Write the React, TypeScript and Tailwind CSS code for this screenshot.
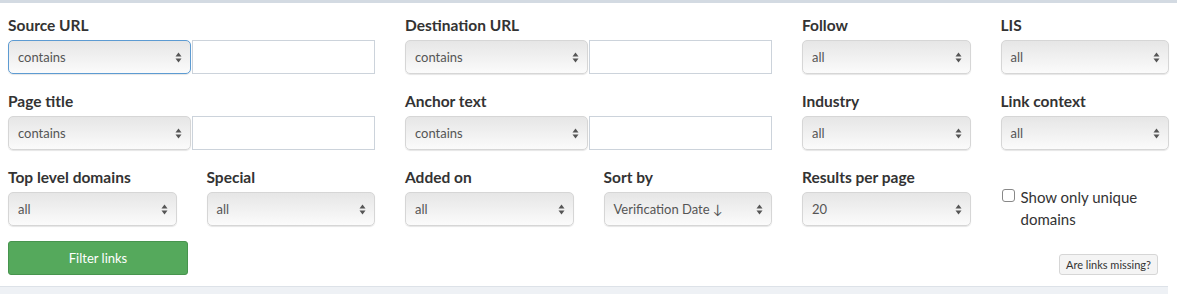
import React from "react";

const font = { fontFamily: '"Source Sans Pro", Lato, "Liberation Sans", sans-serif' };

function Arrows() {
  return (
    <svg width="7" height="11" viewBox="0 0 7 11" className="shrink-0">
      <path d="M3.5 0.5 L6.5 4.5 L0.5 4.5 Z" fill="#555" />
      <path d="M3.5 10.5 L6.5 6.5 L0.5 6.5 Z" fill="#555" />
    </svg>
  );
}

function Select({ value, focused = false, className = "" }: { value: string; focused?: boolean; className?: string }) {
  return (
    <div
      className={
        "h-[34px] flex items-center justify-between pl-[9px] pr-[8px] rounded-[5px] bg-gradient-to-b from-[#e6e6e6] to-[#fbfbfb] text-[13px] text-[#555] shadow-[0_1px_1px_rgba(0,0,0,0.1)] " +
        (focused ? "border border-[#5d9bd2]" : "border border-[#d6d6d6]") +
        " " +
        className
      }
    >
      <span className="pt-[2px]">{value}</span>
      <Arrows />
    </div>
  );
}

function Label({ children }: { children: React.ReactNode }) {
  return <div className="h-[20px] leading-[20px] text-[15.5px] font-bold text-[#333] mb-[5px] whitespace-nowrap">{children}</div>;
}

function TextSelect({ label, focused = false }: { label: string; focused?: boolean }) {
  return (
    <div className="col-span-2">
      <Label>{label}</Label>
      <div className="flex">
        <Select value="contains" focused={focused} className="w-[183px]" />
        <div className="flex-1 h-[34px] border border-[#ccd3db] bg-white ml-px" />
      </div>
    </div>
  );
}

function Field({ label, value }: { label: string; value: string }) {
  return (
    <div>
      <Label>{label}</Label>
      <Select value={value} />
    </div>
  );
}

export default function App() {
  return (
    <div className="w-[1177px] h-[294px] bg-white overflow-hidden" style={font}>
      <div className="h-[3px] bg-[#d3dae2]" />
      <div className="px-[8px] pt-[12px] pb-[11px]">
        <div className="grid grid-cols-[repeat(6,168.5px)] gap-x-[30px] gap-y-[17px]">
          <TextSelect label="Source URL" focused />
          <TextSelect label="Destination URL" />
          <Field label="Follow" value="all" />
          <Field label="LIS" value="all" />

          <TextSelect label="Page title" />
          <TextSelect label="Anchor text" />
          <Field label="Industry" value="all" />
          <Field label="Link context" value="all" />

          <Field label="Top level domains" value="all" />
          <Field label="Special" value="all" />
          <Field label="Added on" value="all" />
          <Field label="Sort by" value="Verification Date ↓" />
          <Field label="Results per page" value="20" />
          <div className="h-[59px] pt-[19px]">
            <label className="flex items-start text-[15px] leading-[22px] text-[#333]">
              <span className="mt-[3px] w-[13px] h-[13px] border border-[#888] rounded-[3px] bg-white shrink-0 mr-[6px] ml-px" />
              <span>Show only unique domains</span>
            </label>
          </div>
        </div>
        <div className="flex items-end justify-between mt-[15px]">
          <button className="w-[180px] h-[34px] pt-[1px] bg-[#55a95c] border border-[#47944e] rounded-[3px] text-white text-[13px]">
            Filter links
          </button>
          <button className="h-[21px] px-[6px] mr-[11px] bg-[#f4f4f4] border border-[#d6d6d6] rounded-[3px] text-[11px] text-[#333] leading-[19px]">
            Are links missing?
          </button>
        </div>
      </div>
      <div className="h-[10px] mr-[9px] bg-[#eef1f5] border-t border-[#dde2e8]" />
    </div>
  );
}
